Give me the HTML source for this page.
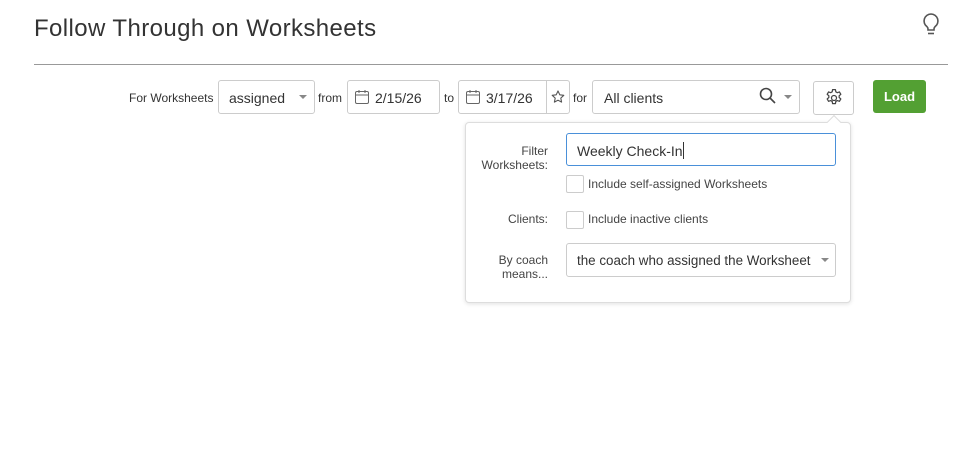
<!DOCTYPE html>
<html><head><style>
*{box-sizing:border-box}
body{margin:0;width:965px;height:472px;background:#fff;font-family:"Liberation Sans",sans-serif;color:#333;position:relative;overflow:hidden}
.a{position:absolute}
h1{position:absolute;left:34px;top:15px;margin:0;font-size:24px;font-weight:normal;color:#333;letter-spacing:0.4px}
.box{position:absolute;border:1px solid #ccc;border-radius:3px;background:#fff;font-size:14px;color:#333}
.lbl{position:absolute;font-size:12px;color:#333}
.car{position:absolute;width:0;height:0;border-left:4px solid transparent;border-right:4px solid transparent;border-top:4px solid #888}
.cb{position:absolute;width:18px;height:18px;border:1px solid #ccc;border-radius:2px;background:#fff}
.pl{position:absolute;font-size:12px;color:#444;text-align:right;width:100px;line-height:14px}
</style></head><body>
<h1>Follow Through on Worksheets</h1>
<svg class="a" style="left:920px;top:12px" width="22" height="26" viewBox="0 0 22 26"><path d="M11 2a7 7 0 0 0-4 12.7c.8.7 1 1.5 1 2.3v1h6v-1c0-.8.3-1.6 1-2.3A7 7 0 0 0 11 2z" fill="none" stroke="#555" stroke-width="1.6"/><path d="M8 21.5h6" stroke="#555" stroke-width="1.6"/></svg>
<div class="a" style="left:34px;top:64px;width:914px;height:1px;background:#999"></div>

<div class="lbl" style="left:129px;top:91px">For Worksheets</div>
<div class="box" style="left:218px;top:80px;width:97px;height:34px;padding:9px 0 0 10px">assigned</div>
<div class="car" style="left:299px;top:95px"></div>
<div class="lbl" style="left:318px;top:91px">from</div>
<div class="box" style="left:347px;top:80px;width:93px;height:34px;padding:9px 0 0 27px">2/15/26</div>
<svg class="a" style="left:354px;top:89px" width="16" height="16" viewBox="0 0 16 16"><rect x="1.5" y="2.5" width="13" height="12" rx="1.5" fill="none" stroke="#666"/><path d="M1.5 6h13M5 1v3M11 1v3" stroke="#666"/></svg>
<div class="lbl" style="left:444px;top:91px">to</div>
<div class="box" style="left:458px;top:80px;width:112px;height:34px;padding:9px 0 0 27px">3/17/26</div>
<div class="a" style="left:546px;top:81px;width:1px;height:32px;background:#ccc"></div>
<svg class="a" style="left:465px;top:89px" width="16" height="16" viewBox="0 0 16 16"><rect x="1.5" y="2.5" width="13" height="12" rx="1.5" fill="none" stroke="#666"/><path d="M1.5 6h13M5 1v3M11 1v3" stroke="#666"/></svg>
<svg class="a" style="left:551px;top:90px" width="14" height="14" viewBox="0 0 14 14"><path d="M7 1l1.8 3.8 4 .5-3 2.8.8 4L7 10.2 3.4 12.1l.8-4-3-2.8 4-.5z" fill="none" stroke="#555" stroke-width="1.1" stroke-linejoin="round"/></svg>
<div class="lbl" style="left:573px;top:91px">for</div>
<div class="box" style="left:592px;top:80px;width:208px;height:34px;padding:9px 0 0 11px">All clients</div>
<svg class="a" style="left:759px;top:87px" width="18" height="18" viewBox="0 0 18 18"><circle cx="7" cy="7" r="5.5" fill="none" stroke="#444" stroke-width="1.6"/><path d="M11 11l5 5" stroke="#444" stroke-width="1.6"/></svg>
<div class="car" style="left:784px;top:95px"></div>
<div class="box" style="left:813px;top:81px;width:41px;height:34px"></div>
<svg class="a" style="left:824px;top:88px" width="20" height="20" viewBox="0 0 24 24"><path d="M10.3 2h3.4l.5 2.6 1.8 1 2.5-.9 1.7 2.9-2 1.7v2.1l2 1.7-1.7 2.9-2.5-.9-1.8 1-.5 2.6h-3.4l-.5-2.6-1.8-1-2.5.9-1.7-2.9 2-1.7v-2.1l-2-1.7 1.7-2.9 2.5.9 1.8-1z" fill="none" stroke="#444" stroke-width="1.5" stroke-linejoin="round"/><circle cx="12" cy="12" r="3" fill="none" stroke="#444" stroke-width="1.5"/></svg>
<div class="a" style="left:873px;top:80px;width:53px;height:33px;background:#53a033;border-radius:3px;color:#fff;font-size:13px;font-weight:bold;text-align:center;line-height:33px">Load</div>

<div class="a" style="left:465px;top:122px;width:386px;height:181px;border:1px solid #ddd;border-radius:4px;background:#fff;box-shadow:0 1px 4px rgba(0,0,0,.12)"></div>
<div class="a" style="left:829px;top:117px;width:10px;height:10px;background:#fff;border-left:1px solid #ddd;border-top:1px solid #ddd;transform:rotate(45deg)"></div>
<div class="pl" style="left:448px;top:144px">Filter<br>Worksheets:</div>
<div class="box" style="left:566px;top:133px;width:270px;height:33px;border-color:#4a90d9;padding:8px 0 0 10px">Weekly Check-In<span style="display:inline-block;width:1px;height:17px;background:#333;vertical-align:-3px"></span></div>
<div class="cb" style="left:566px;top:175px"></div>
<div class="lbl" style="left:588px;top:177px;color:#444">Include self-assigned Worksheets</div>
<div class="pl" style="left:448px;top:212px">Clients:</div>
<div class="cb" style="left:566px;top:211px"></div>
<div class="lbl" style="left:588px;top:212px;color:#444">Include inactive clients</div>
<div class="pl" style="left:448px;top:253px">By coach<br>means...</div>
<div class="box" style="left:566px;top:243px;width:270px;height:34px;padding:9px 0 0 10px;font-size:13.4px">the coach who assigned the Worksheet</div>
<div class="car" style="left:821px;top:258px"></div>
</body></html>
